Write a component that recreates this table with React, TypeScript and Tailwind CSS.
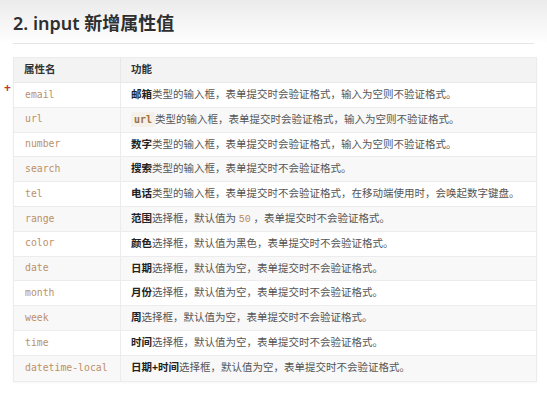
const rows: { name: string; lead: string; code?: boolean; rest: React.ReactNode }[] = [
  { name: "email", lead: "邮箱", rest: "类型的输入框，表单提交时会验证格式，输入为空则不验证格式。" },
  { name: "url", lead: "url", code: true, rest: " 类型的输入框，表单提交时会验证格式，输入为空则不验证格式。" },
  { name: "number", lead: "数字", rest: "类型的输入框，表单提交时会验证格式，输入为空则不验证格式。" },
  { name: "search", lead: "搜索", rest: "类型的输入框，表单提交时不会验证格式。" },
  { name: "tel", lead: "电话", rest: "类型的输入框，表单提交时不会验证格式，在移动端使用时，会唤起数字键盘。" },
  {
    name: "range",
    lead: "范围",
    rest: (
      <>
        选择框，默认值为 <span className="font-mono text-[10px] text-[#c08a55]">50</span> ，表单提交时不会验证格式。
      </>
    ),
  },
  { name: "color", lead: "颜色", rest: "选择框，默认值为黑色，表单提交时不会验证格式。" },
  { name: "date", lead: "日期", rest: "选择框，默认值为空，表单提交时不会验证格式。" },
  { name: "month", lead: "月份", rest: "选择框，默认值为空，表单提交时不会验证格式。" },
  { name: "week", lead: "周", rest: "选择框，默认值为空，表单提交时不会验证格式。" },
  { name: "time", lead: "时间", rest: "选择框，默认值为空，表单提交时不会验证格式。" },
  { name: "datetime-local", lead: "日期+时间", rest: "选择框，默认值为空，表单提交时不会验证格式。" },
];

const cjk = { fontFamily: '"Noto Sans", "Noto Sans CJK SC", sans-serif' };
const mono = { fontFamily: '"DejaVu Sans Mono", "Liberation Mono", monospace' };

export default function App() {
  return (
    <div className="w-[547px] h-[400px] bg-white overflow-hidden" style={cjk}>
      <div className="bg-gradient-to-b from-[#ebebeb] to-white px-[13px] pt-[8px]">
        <h1 className="text-[18px] leading-[30px] font-semibold text-[#2f2f2f]">2. input 新增属性值</h1>
        <div className="mt-[5px] h-px bg-[#e6e6e6]" />
      </div>

      <div className="relative ml-[13px] mt-[13px] w-[524px]">
        <span className="absolute left-[-9px] top-[25px] text-[12px] leading-[12px] font-bold text-[#c0392b]">+</span>
        <div className="border border-[#ececec] shadow-[0_1px_2px_rgba(0,0,0,0.04)]">
          <div className="flex h-[25px] bg-[#f3f3f3] text-[10.5px] font-bold text-[#333] border-b border-[#e8e8e8]">
            <div className="w-[107px] pl-[10px] flex items-center border-r border-[#e8e8e8]">属性名</div>
            <div className="flex-1 pl-[10px] flex items-center">功能</div>
          </div>
          {rows.map((r, i) => (
            <div
              key={r.name}
              className={`flex h-[24.8px] border-b border-[#ececec] last:border-b-0 ${i % 2 === 1 ? "bg-[#f8f8f8]" : "bg-white"}`}
            >
              <div
                className="w-[107px] pl-[11px] flex items-center text-[9.8px] text-[#bb9068] border-r border-[#ececec]"
                style={mono}
              >
                {r.name}
              </div>
              <div className="flex-1 pl-[10px] flex items-center text-[10.5px] text-[#555] whitespace-nowrap">
                {r.code ? (
                  <span className="font-bold text-[10px] text-[#a0703f] px-[3px] rounded-[2px] bg-[#f4f0ea]" style={mono}>
                    {r.lead}
                  </span>
                ) : (
                  <span className="font-bold text-[#222]">{r.lead}</span>
                )}
                <span>{r.rest}</span>
              </div>
            </div>
          ))}
        </div>
      </div>
    </div>
  );
}
